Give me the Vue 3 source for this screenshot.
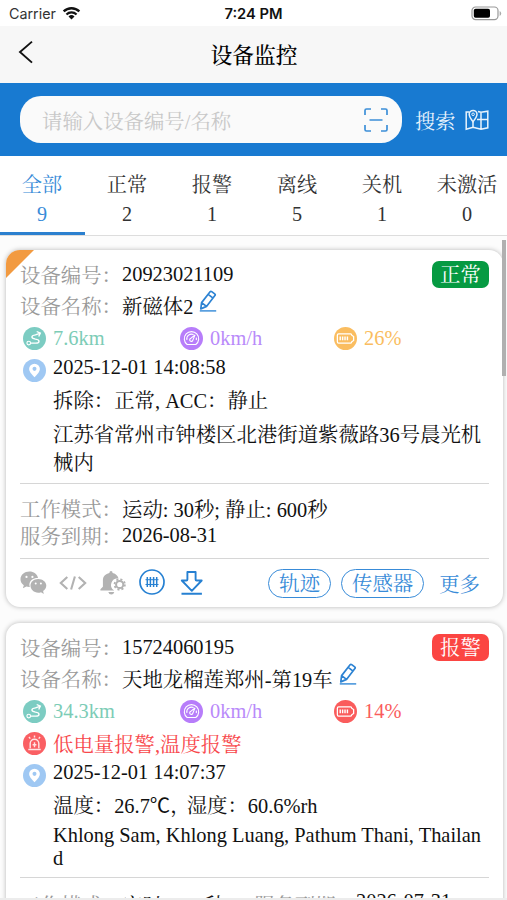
<template>
  <div class="page">
    <div class="status-bar">
      <div class="carrier">
        <span>Carrier</span>
        <svg class="wifi" viewBox="0 0 20 15">
          <path d="M1.6 5.8a12 12 0 0 1 16.8 0" fill="none" stroke="#111" stroke-width="2.5" />
          <path d="M4.6 9.1a7.7 7.7 0 0 1 10.8 0" fill="none" stroke="#111" stroke-width="2.4" />
          <path d="M10 14.4 6.8 11.2a4.6 4.6 0 0 1 6.4 0z" fill="#111" />
        </svg>
      </div>
      <span class="time">7:24 PM</span>
      <svg class="power" viewBox="0 0 31 15">
        <rect x="1" y="1" width="26" height="12.6" rx="3.6" fill="none" stroke="#999" stroke-width="1.2" />
        <rect x="2.8" y="2.8" width="16.2" height="9" rx="1.8" fill="#000" />
        <path d="M28.6 5v5q1.6-.8 1.6-2.5T28.6 5z" fill="#aaa" />
      </svg>
    </div>

    <div class="nav">
      <svg class="back" viewBox="0 0 16 24">
        <path d="M14 1.6 2 12l12 10.6" fill="none" stroke="#111" stroke-width="1.9" />
      </svg>
      <span class="title">设备监控</span>
    </div>

    <div class="search">
      <div class="search-box">
        <span class="placeholder">请输入设备编号/名称</span>
        <svg class="scan" viewBox="0 0 24 24">
          <path d="M1 7V2.5Q1 1 2.5 1H7M17 1h4.500Q23 1 23 2.500V7M23 17v4.500Q23 23 21.500 23H17M7 23H2.500Q1 23 1 21.500V17M5.500 12h13" fill="none" stroke="#3c8fd8" stroke-width="1.7" />
        </svg>
      </div>
      <span class="search-btn">搜索</span>
      <svg class="map" viewBox="0 0 24 22">
        <path d="M4.500 3H1.200v17.300l6.800-2 8 2 6.800-1.500V2.200L16 3.200l-3-.7M8 12.800v5.500M16 3.200v17M12 10.500h10.800" fill="none" stroke="#e8f3fc" stroke-width="1.5" />
        <path d="M8 12.800C5.700 9.800 4.200 7.700 4.200 5.300a3.900 3.900 0 0 1 7.800 0c0 2.400-1.700 4.500-4 7.500z" fill="#187ad1" stroke="#e8f3fc" stroke-width="1.500" />
        <circle cx="8.100" cy="5.300" r="1.300" fill="none" stroke="#e8f3fc" />
      </svg>
    </div>

    <div class="tabs">
      <div v-for="(tab, index) in tabs" :key="tab.name" class="tab" :class="{ active: index === current }" @click="current = index">
        <span>{{ tab.name }}</span>
        <span>{{ tab.count }}</span>
      </div>
    </div>

    <div class="list">
      <div v-for="item in devices" :key="item.code" class="card">
        <div v-if="item.corner" class="corner"></div>
        <div class="row row-code">
          <span class="label">设备编号：</span>
          <span>{{ item.code }}</span>
          <span class="state" :class="item.state">{{ item.stateText }}</span>
        </div>
        <div class="row row-name">
          <span class="label">设备名称：</span>
          <span>{{ item.name }}</span>
          <svg class="edit" viewBox="0 0 18 22">
            <path d="M2.600 12.600 11.100 1.800q.7-.9 1.600-.2l3 2.300q.9.700.2 1.600L7.500 16.400l-5.700 2.500zM9.200 4.300l4.900 3.800M2.600 12.600l4.900 3.800" fill="none" stroke="#2d83d3" stroke-width="1.700" stroke-linejoin="round" />
            <path d="M.8 20.900h16.400" stroke="#5ba0df" stroke-width="1.800" />
          </svg>
        </div>
        <div class="metrics">
          <div class="metric mileage">
            <svg class="dot" viewBox="0 0 24 24">
              <circle cx="12" cy="12" r="12" fill="#7cccc2" />
              <path d="M7.800 16.800h5.500q3.400 0 3.400-2 0-1.500-3.700-2.100-3.700-.7-3.700-2.200 0-1.600 3.700-2.200l4.500-1.600M14.300 4.700l3.800 1.700-1.700 3.500" fill="none" stroke="#fff" stroke-width="1.400" />
              <circle cx="6" cy="16.800" r="1.900" fill="none" stroke="#fff" stroke-width="1.200" />
            </svg>
            <span>{{ item.mileage }}</span>
          </div>
          <div class="metric speed">
            <svg class="dot" viewBox="0 0 24 24">
              <circle cx="12" cy="12" r="12" fill="#b77dfa" />
              <path d="M7.500 18.300a7.500 7.500 0 1 1 9 0zM7.200 13.500a5 5 0 0 1 7-5.600M17 11q.3 1.300-.1 2.600" fill="none" stroke="#fff" stroke-width="1.200" />
              <path d="m15.700 8.200-2.400 5.700a1.600 1.600 0 1 1-2.400-1.800z" fill="none" stroke="#fff" stroke-width="1.200" />
            </svg>
            <span>{{ item.speed }}</span>
          </div>
          <div class="metric battery" :class="{ low: item.low }">
            <svg class="dot" viewBox="0 0 24 24">
              <circle cx="12" cy="12" r="12" fill="currentColor" />
              <path d="M4.800 7.300h12.400q1.300 0 1.300 1.300l2 1.400v4l-2 1.400q0 1.300-1.300 1.300H4.800q-1.300 0-1.300-1.300V8.600q0-1.300 1.300-1.300z" fill="none" stroke="#fff" stroke-width="1.300" />
              <path d="M6.500 9.800v4M9 9.800v4M11.500 9.800v4M14 9.800v4" stroke="#fff" stroke-width="1.500" />
            </svg>
            <span>{{ item.battery }}</span>
          </div>
        </div>
        <div v-if="item.alarm" class="info alarm">
          <svg class="dot" viewBox="0 0 24 24">
            <circle cx="12" cy="12" r="12" fill="#fa5f63" />
            <path d="M7.500 17v-5a4.500 4.500 0 0 1 9 0v5M5.500 18.300h13M12 3.700v2M6.200 5.300l1.400 1.600M17.800 5.300l-1.400 1.600" fill="none" stroke="#ffe4e4" stroke-width="1.500" />
            <path d="M12 10.800v5.200M10 13.400h4" stroke="#ffe4e4" stroke-width="1.500" />
          </svg>
          <span>{{ item.alarm }}</span>
        </div>
        <div class="info date">
          <svg class="dot pin" viewBox="0 0 24 24">
            <circle cx="12" cy="12" r="12" fill="#9fc8f3" />
            <path d="M12 19c-3.700-3.700-5.600-6-5.600-8.500a5.600 5.600 0 0 1 11.200 0C17.600 13 15.700 15.300 12 19z" fill="#fff" />
            <circle cx="12" cy="10.300" r="2.100" fill="#9fc8f3" />
          </svg>
          <span>{{ item.date }}</span>
        </div>
        <div class="sensor">
          <template v-if="item.temperature">温度：{{ item.temperature }}<span class="unit">℃</span><span class="comma">，</span>湿度：{{ item.humidity }}%rh</template>
          <template v-else>{{ item.sensor }}</template>
        </div>
        <div class="address" :class="{ latin: item.latin }">{{ item.address }}</div>

        <div v-if="!item.inline" class="service">
          <div class="service-row">
            <span class="label">工作模式：</span>
            <span>{{ item.mode }}</span>
          </div>
          <div class="service-row">
            <span class="label">服务到期：</span>
            <span>{{ item.expire }}</span>
          </div>
        </div>
        <div v-else class="service inline">
          <span class="label">工作模式：</span>
          <span class="mode">{{ item.mode }}</span>
          <span class="label">服务到期：</span>
          <span>{{ item.expire }}</span>
        </div>

        <div class="actions">
          <svg class="wechat" viewBox="0 0 27 24">
            <path d="M9.500.5C4.500.5.500 3.800.500 8.200c0 2.500 1.300 4.500 3.300 6l-.9 3 3.500-1.700q1.600.5 3.400.4a7.400 7.400 0 0 1-.4-2.300c0-4.100 3.800-6.800 8.600-6.700C17.300 3.100 13.700.5 9.500.5z" fill="#b2b2b2" />
            <path d="M18.200 7.900c-4.300 0-7.700 2.800-7.700 6.700s3.400 7.100 7.700 7.100q1.400 0 2.800-.5l2.800 1.800-.7-2.900c1.800-1.300 3.200-3.200 3.200-5.500 0-3.900-3.800-6.700-8.100-6.700z" fill="#b2b2b2" />
            <circle cx="6.500" cy="5.900" r="1.100" fill="#fff" />
            <circle cx="12.400" cy="5.900" r="1.100" fill="#fff" />
            <circle cx="15.700" cy="12.600" r="1" fill="#fff" />
            <circle cx="20.900" cy="12.600" r="1" fill="#fff" />
          </svg>
          <svg class="code" viewBox="0 0 28 16">
            <path d="M8.300 2 1.800 8l6.500 6M19.700 2l6.500 6-6.500 6M15.900 1.500l-3.800 13" fill="none" stroke="#b2b2b2" stroke-width="2.100" />
          </svg>
          <svg class="bell" viewBox="0 0 26 24">
            <path d="M11 0q1.600 0 1.600 2c3.500.8 5.500 3.200 5.900 5.500a6.500 6.500 0 0 0-4.300 12H.4v-1.300l2.500-2.500V9.300C2.900 5.400 5.500 2.800 9.400 2Q9.400 0 11 0zM8.300 21h6q-.7 2.500-3 2.500t-3-2.500z" fill="#b2b2b2" />
            <circle cx="19.700" cy="13.500" r="3.600" fill="none" stroke="#b2b2b2" stroke-width="2" />
            <circle cx="19.700" cy="13.500" r="5.200" fill="none" stroke="#b2b2b2" stroke-width="1.800" stroke-dasharray="2.100 1.984" />
          </svg>
          <svg class="fence" viewBox="0 0 26 26">
            <circle cx="13" cy="13" r="12" fill="none" stroke="#2680d2" stroke-width="1.700" />
            <path d="M8.300 8v10M11.400 8v10M14.600 8v10M17.700 8v10" stroke="#2680d2" stroke-width="1.500" />
            <path d="M6.500 10.700h13M6.500 15.500h13" stroke="#2680d2" stroke-width="1" />
          </svg>
          <svg class="download" viewBox="0 0 24 24">
            <path d="M7.400 1h8.200v7.500q0 1 1 1h5.100L11.800 19.800 1.800 9.500h4.600q1 0 1-1z" fill="none" stroke="#2680d2" stroke-width="1.900" stroke-linejoin="round" />
            <path d="M1.500 22.800h20.400" stroke="#2680d2" stroke-width="1.900" />
          </svg>
          <span class="btn track">轨迹</span>
          <span class="btn">传感器</span>
          <span class="more">更多</span>
        </div>
      </div>
      <div class="scrollbar"></div>
    </div>
  </div>
</template>

<script setup>
import { ref } from 'vue'

const current = ref(0)

const tabs = ref([
  { name: '全部', count: 9 },
  { name: '正常', count: 2 },
  { name: '报警', count: 1 },
  { name: '离线', count: 5 },
  { name: '关机', count: 1 },
  { name: '未激活', count: 0 },
])

const devices = ref([
  {
    code: '20923021109',
    name: '新磁体2',
    corner: true,
    state: 'normal',
    stateText: '正常',
    mileage: '7.6km',
    speed: '0km/h',
    battery: '26%',
    date: '2025-12-01 14:08:58',
    sensor: '拆除：正常, ACC：静止',
    address: '江苏省常州市钟楼区北港街道紫薇路36号晨光机械内',
    mode: '运动: 30秒; 静止: 600秒',
    expire: '2026-08-31',
  },
  {
    code: '15724060195',
    name: '天地龙榴莲郑州-第19车',
    state: 'warning',
    stateText: '报警',
    mileage: '34.3km',
    speed: '0km/h',
    battery: '14%',
    low: true,
    alarm: '低电量报警,温度报警',
    date: '2025-12-01 14:07:37',
    temperature: 26.7,
    humidity: 60.6,
    address: 'Khlong Sam, Khlong Luang, Pathum Thani, Thailand',
    latin: true,
    inline: true,
    mode: '定时: 600秒',
    expire: '2026-07-31',
  },
])
</script>

<style>
body {
  margin: 0;
  background: #fff;
}
</style>

<style scoped>
.page {
  display: flex;
  flex-direction: column;
  width: 507px;
  height: 900px;
  box-sizing: border-box;
  overflow: hidden;
  border-bottom: 2px solid #ececec;
  background: #fcfcfc;
  color: #111;
  font-family: "Liberation Serif", "Noto Serif CJK SC", "Noto Sans CJK SC", serif;
  font-size: 20.4px;
  white-space: nowrap;
}

svg {
  display: block;
  flex-shrink: 0;
}

.status-bar {
  display: grid;
  grid-template-columns: 1fr auto 1fr;
  align-items: center;
  height: 26px;
  flex-shrink: 0;
  padding: 1px 5px 0 9px;
  box-sizing: border-box;
  background: #fff;
  font-family: Inter, "Liberation Sans", sans-serif;
  font-size: 14.3px;
}

.carrier {
  display: flex;
  align-items: center;
  gap: 6px;
  color: #333;
}

.wifi {
  width: 19px;
  height: 14px;
  margin-top: -2px;
}

.time {
  font-size: 14.7px;
  font-weight: 600;
  margin-left: -4px;
}

.power {
  justify-self: end;
  width: 31px;
  height: 15px;
  margin-top: -1px;
}

.nav {
  display: grid;
  grid-template-columns: 60px 1fr 60px;
  align-items: center;
  height: 57px;
  flex-shrink: 0;
  background: #f7f7f7;
}

.back {
  width: 16px;
  height: 24px;
  margin: -5px 0 0 18px;
}

.title {
  margin: -2px 0 0 1px;
  text-align: center;
  font-size: 21.8px;
  font-weight: 500;
  color: #000;
}

.search {
  display: flex;
  align-items: center;
  height: 73px;
  flex-shrink: 0;
  box-sizing: border-box;
  padding: 0 17px 0 20px;
  background: #187ad1;
}

.search-box {
  display: flex;
  align-items: center;
  justify-content: space-between;
  width: 382px;
  flex-shrink: 0;
  height: 47px;
  box-sizing: border-box;
  padding: 1px 14px 0 22px;
  border-radius: 21px;
  background: #fafafa;
}

.placeholder {
  margin-top: 1px;
  color: #c8c8c8;
}

.scan {
  width: 24px;
  height: 24px;
}

.search-btn {
  margin: 2px 10px 0 13px;
  font-size: 20.2px;
  color: #e8f3fc;
}

.map {
  width: 24px;
  height: 22px;
}

.tabs {
  display: flex;
  height: 80px;
  flex-shrink: 0;
  box-sizing: border-box;
  border-bottom: 1px solid #ddd;
  background: #fff;
}

.tab {
  display: flex;
  flex: 0 0 85px;
  flex-direction: column;
  align-items: center;
  box-sizing: border-box;
  padding: 15px 1px 0 0;
  line-height: 29px;
  font-size: 20.2px;
  color: #333;
}

.tab.active {
  color: #388bd8;
  border-bottom: 3px solid #2b80cf;
}

.list {
  position: relative;
  flex: 1;
  min-height: 0;
  overflow: hidden;
  padding: 14px 4px 0 6px;
}

.scrollbar {
  position: absolute;
  top: 4px;
  right: 1px;
  width: 4px;
  height: 136px;
  background: #b0b0b0;
}

.card {
  position: relative;
  height: 357px;
  box-sizing: border-box;
  padding: 8px 14px 0 14px;
  margin-bottom: 16px;
  border-radius: 14px;
  background: #fff;
  box-shadow: 0 0 5px rgba(0, 0, 0, 0.28);
  overflow: hidden;
}

.card:nth-child(2) {
  height: 400px;
}

.corner {
  position: absolute;
  top: 0;
  left: 0;
  border-top: 28px solid #f29a40;
  border-right: 28px solid transparent;
}

.row {
  position: relative;
  display: flex;
  align-items: center;
}

.row-code {
  height: 32px;
}

.row-name {
  height: 31px;
}

.label {
  width: 102px;
  flex-shrink: 0;
  color: #999;
}

.state {
  width: 57px;
  height: 27px;
  margin-left: auto;
  border-radius: 7px;
  line-height: 29px;
  text-align: center;
  color: #fff;
}

.state.normal {
  background: #069a42;
}

.state.warning {
  background: #fb4542;
}

.edit {
  width: 18px;
  height: 22px;
  margin: -9px 0 0 6px;
}

.metrics {
  display: grid;
  grid-template-columns: 157px 154px 1fr;
  align-items: center;
  height: 34px;
  padding-left: 3px;
}

.metric,
.info {
  display: flex;
  align-items: center;
  gap: 7px;
}

.dot {
  width: 23px;
  height: 23px;
}

.mileage {
  color: #7cccb6;
}

.speed {
  color: #b98afa;
}

.battery {
  color: #fabd60;
}

.battery.low {
  color: #fa5c5c;
}

.info {
  height: 29px;
  padding-left: 3px;
}

.pin {
  margin-top: 5px;
}

.alarm {
  height: 30px;
  margin-bottom: 2px;
  color: #f8484c;
}

.date {
  margin-top: -2px;
}

.sensor {
  height: 32px;
  margin-top: 3px;
  padding-left: 33px;
  line-height: 32px;
}

.unit {
  font-family: "Noto Sans CJK SC", sans-serif;
  line-height: 1;
}

.comma {
  letter-spacing: -4px;
}

.address {
  height: 56px;
  margin-top: 4px;
  padding: 0 5px 0 33px;
  line-height: 28px;
  white-space: normal;
  word-break: break-all;
}

.address.latin {
  height: 46px;
  margin-top: 2px;
  line-height: 22.5px;
}

.service {
  margin-top: 6px;
  padding: 11px 0 9px;
  border-top: 1px solid #d6d6d6;
  border-bottom: 1px solid #d6d6d6;
}

.latin + .service {
  margin-top: 7px;
}

.service-row {
  display: flex;
  align-items: center;
  height: 27px;
}

.service.inline {
  display: flex;
  padding-top: 12px;
}

.mode {
  width: 132px;
}

.actions {
  display: flex;
  align-items: center;
  height: 48px;
  color: #388bd8;
}

.wechat {
  width: 27px;
  height: 24px;
}

.code {
  width: 28px;
  height: 16px;
  margin-left: 12px;
}

.bell {
  width: 26px;
  height: 24px;
  margin-left: 13px;
}

.fence {
  width: 26px;
  height: 26px;
  margin: -2px 0 0 13px;
}

.download {
  width: 24px;
  height: 24px;
  margin-left: 15px;
}

.btn {
  height: 29px;
  box-sizing: border-box;
  margin-left: 10px;
  padding: 0 10px;
  border: 1.5px solid #388bd8;
  border-radius: 15px;
  line-height: 29px;
}

.btn.track {
  margin-left: auto;
}

.more {
  margin: 0 9px 0 15px;
}
</style>
